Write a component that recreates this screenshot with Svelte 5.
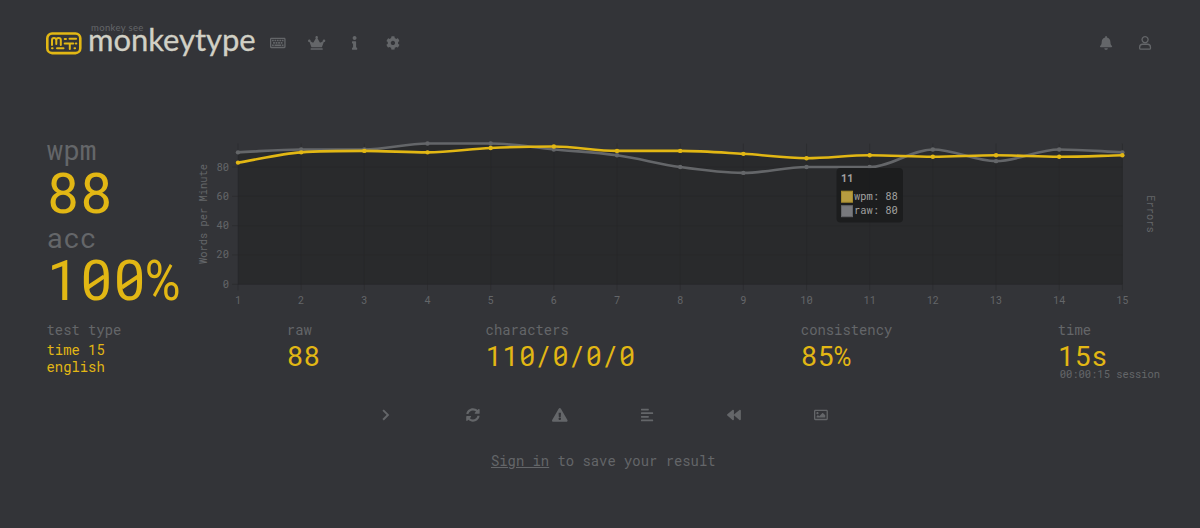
<script>
  const wpm = [83, 90, 91, 90, 93, 94, 91, 91, 89, 86, 88, 87, 88, 87, 88];
  const raw = [90, 92, 92, 96, 96, 92, 88, 80, 76, 80, 80, 92, 84, 92, 90];
  const ticks = [0, 20, 40, 60, 80];

  const left = 42;
  const bottom = 147.3;
  const step = 63.17;
  const right = left + step * 14;

  const px = (i) => left + i * step;
  const py = (v) => bottom - v * 1.466;

  // monotone cubic interpolation, so the line never overshoots a point
  const curve = (values) => {
    const d = values.slice(1).map((v, i) => v - values[i]);
    const m = values.map((_, i) => {
      if (i === 0) return d[0];
      if (i === values.length - 1) return d[i - 1];
      return d[i - 1] * d[i] <= 0 ? 0 : (d[i - 1] + d[i]) / 2;
    });
    d.forEach((slope, i) => {
      if (slope === 0) {
        m[i] = m[i + 1] = 0;
        return;
      }
      const a = m[i] / slope;
      const b = m[i + 1] / slope;
      const size = a * a + b * b;
      if (size > 9) {
        const t = 3 / Math.sqrt(size);
        m[i] = a * t * slope;
        m[i + 1] = b * t * slope;
      }
    });
    let path = `M${px(0)} ${py(values[0])}`;
    for (let i = 0; i < d.length; i++) {
      path += `C${px(i + 1 / 3)} ${py(values[i] + m[i] / 3)} ${px(i + 2 / 3)} ${py(values[i + 1] - m[i + 1] / 3)} ${px(i + 1)} ${py(values[i + 1])}`;
    }
    return path;
  };

  const area = (values) => `${curve(values)}V${bottom}H${left}Z`;

  const icons = {
    keyboard: {
      w: 576,
      d: 'M528 64H48C21.5 64 0 85.5 0 112v288c0 26.5 21.5 48 48 48h480c26.5 0 48-21.5 48-48V112c0-26.5-21.5-48-48-48zm-6 336H54a6 6 0 0 1-6-6V118a6 6 0 0 1 6-6h468a6 6 0 0 1 6 6v276a6 6 0 0 1-6 6zM76 136h64v56H76zm90 0h64v56h-64zm90 0h64v56h-64zm90 0h64v56h-64zm90 0h64v56h-64zM116 222h64v60h-64zm93 0h64v60h-64zm93 0h64v60h-64zm93 0h64v60h-64zM76 312h64v60H76zm90 0h244v60H166zm270 0h64v60h-64z'
    },
    crown: {
      w: 640,
      d: 'M528 448H112c-8.8 0-16 7.2-16 16v32c0 8.8 7.2 16 16 16h416c8.8 0 16-7.2 16-16v-32c0-8.8-7.2-16-16-16zm64-320c-26.5 0-48 21.5-48 48 0 7.1 1.6 13.7 4.4 19.8L476 239.2c-15.4 9.2-35.3 4-44.2-11.6L350.3 85C361 76.2 368 63 368 48c0-26.5-21.5-48-48-48s-48 21.5-48 48c0 15 7 28.2 17.7 37l-81.5 142.6c-8.9 15.6-28.9 20.8-44.2 11.6l-72.3-43.4c2.7-6 4.4-12.7 4.4-19.8 0-26.5-21.5-48-48-48S0 149.5 0 176s21.5 48 48 48c2.6 0 5.2-.4 7.7-.8L128 416h384l72.3-192.8c2.5.4 5.1.8 7.7.8 26.5 0 48-21.5 48-48s-21.5-48-48-48z'
    },
    info: {
      w: 192,
      d: 'M20 424.229h20V279.771H20c-11.046 0-20-8.954-20-20V212c0-11.046 8.954-20 20-20h112c11.046 0 20 8.954 20 20v212.229h20c11.046 0 20 8.954 20 20V492c0 11.046-8.954 20-20 20H20c-11.046 0-20-8.954-20-20v-47.771c0-11.046 8.954-20 20-20zM96 0C56.235 0 24 32.235 24 72s32.235 72 72 72 72-32.235 72-72S135.764 0 96 0z'
    },
    cog: {
      w: 512,
      d: 'M487.4 315.7l-42.6-24.6c4.3-23.2 4.3-47 0-70.2l42.6-24.6c4.9-2.8 7.1-8.6 5.5-14-11.1-35.6-30-67.8-54.7-94.6-3.8-4.1-10-5.1-14.8-2.3L380.8 110c-17.9-15.4-38.5-27.3-60.8-35.1V25.8c0-5.6-3.9-10.5-9.4-11.7-36.7-8.2-74.3-7.8-109.2 0-5.5 1.2-9.4 6.1-9.4 11.7V75c-22.2 7.9-42.8 19.8-60.8 35.1L88.7 85.5c-4.9-2.8-11-1.9-14.8 2.3-24.7 26.7-43.6 58.9-54.7 94.6-1.7 5.4.6 11.2 5.5 14L67.3 221c-4.3 23.2-4.3 47 0 70.2l-42.6 24.6c-4.9 2.8-7.1 8.6-5.5 14 11.1 35.6 30 67.8 54.7 94.6 3.8 4.1 10 5.1 14.8 2.3l42.6-24.6c17.9 15.4 38.5 27.3 60.8 35.1v49.2c0 5.6 3.9 10.5 9.4 11.7 36.7 8.2 74.3 7.8 109.2 0 5.5-1.2 9.4-6.1 9.4-11.7v-49.2c22.2-7.9 42.8-19.8 60.8-35.1l42.6 24.6c4.9 2.8 11 1.9 14.8-2.3 24.7-26.7 43.6-58.9 54.7-94.6 1.5-5.5-.7-11.3-5.6-14.1zM256 336c-44.1 0-80-35.9-80-80s35.9-80 80-80 80 35.9 80 80-35.9 80-80 80z'
    },
    bell: {
      w: 448,
      d: 'M224 512c35.32 0 63.97-28.65 63.97-64H160.03c0 35.35 28.65 64 63.97 64zm215.39-149.71c-19.32-20.76-55.47-51.99-55.47-154.29 0-77.7-54.48-139.9-127.94-155.16V32c0-17.67-14.32-32-31.98-32s-31.98 14.33-31.98 32v20.84C118.56 68.1 64.08 130.3 64.08 208c0 102.3-36.15 133.53-55.47 154.29-6 6.45-8.66 14.16-8.61 21.71.11 16.4 12.98 32 32.1 32h383.8c19.12 0 32-15.6 32.1-32 .05-7.55-2.61-15.27-8.61-21.71z'
    },
    user: {
      w: 448,
      line: 'M224 24a112 112 0 1 0 .1 0zM135 304h178c62 0 111 48 111 110v40c0 20-14 34-34 34H58c-20 0-34-14-34-34v-40c0-62 49-110 111-110z'
    },
    next: { w: 320, line: 'M78 76l178 180L78 436', thick: true },
    sync: {
      w: 512,
      d: 'M370.72 133.28C339.458 104.008 298.888 87.962 255.848 88c-77.458.068-144.328 53.178-162.791 126.85-1.344 5.363-6.122 9.15-11.651 9.15H24.103c-7.498 0-13.194-6.807-11.807-14.176C33.933 94.924 134.813 8 256 8c66.448 0 126.791 26.136 171.315 68.685L463.03 40.97C478.149 25.851 504 36.559 504 57.941V192c0 13.255-10.745 24-24 24H345.941c-21.382 0-32.09-25.851-16.971-40.971l41.75-41.749zM32 296h134.059c21.382 0 32.09 25.851 16.971 40.971l-41.75 41.75c31.262 29.273 71.835 45.319 114.876 45.28 77.418-.07 144.315-53.144 162.787-126.849 1.344-5.363 6.122-9.15 11.651-9.15h57.304c7.498 0 13.194 6.807 11.807 14.176C478.067 417.076 377.187 504 256 504c-66.448 0-126.791-26.136-171.315-68.685L48.97 471.03C33.851 486.149 8 475.441 8 454.059V320c0-13.255 10.745-24 24-24z'
    },
    warning: {
      w: 576,
      d: 'M569.517 440.013C587.975 472.007 564.806 512 527.94 512H48.054c-36.937 0-59.999-40.055-41.577-71.987L246.423 23.985c18.467-32.009 64.72-31.951 83.154 0l239.94 416.028zM288 354c-25.405 0-46 20.595-46 46s20.595 46 46 46 46-20.595 46-46-20.595-46-46-46zm-43.673-165.346l7.418 136c.347 6.364 5.609 11.346 11.982 11.346h48.546c6.373 0 11.635-4.982 11.982-11.346l7.418-136c.375-6.874-5.098-12.654-11.982-12.654h-63.383c-6.884 0-12.356 5.78-11.981 12.654z'
    },
    align: {
      w: 448,
      d: 'M14 24h260q14 0 14 14v36q0 14-14 14H14Q0 88 0 74V38Q0 24 14 24zm0 134h420q14 0 14 14v36q0 14-14 14H14q-14 0-14-14v-36q0-14 14-14zm0 134h260q14 0 14 14v36q0 14-14 14H14q-14 0-14-14v-36q0-14 14-14zm0 134h420q14 0 14 14v36q0 14-14 14H14q-14 0-14-14v-36q0-14 14-14z'
    },
    backward: {
      w: 512,
      d: 'M11.5 280.6l192 160c20.6 17.2 52.5 2.8 52.5-24.6V96c0-27.4-31.9-41.8-52.5-24.6l-192 160c-15.3 12.8-15.3 36.4 0 49.2zm256 0l192 160c20.6 17.2 52.5 2.8 52.5-24.6V96c0-27.4-31.9-41.8-52.5-24.6l-192 160c-15.3 12.8-15.3 36.4 0 49.2z'
    },
    image: {
      w: 512,
      d: 'M464 64H48C21.49 64 0 85.49 0 112v288c0 26.51 21.49 48 48 48h416c26.51 0 48-21.49 48-48V112c0-26.51-21.49-48-48-48zm-6 336H54a6 6 0 0 1-6-6V118a6 6 0 0 1 6-6h404a6 6 0 0 1 6 6v276a6 6 0 0 1-6 6zM128 152c-22.091 0-40 17.909-40 40s17.909 40 40 40 40-17.909 40-40-17.909-40-40-40zM96 352h320v-80l-87.515-87.515c-4.686-4.686-12.284-4.686-16.971 0L192 304l-39.515-39.515c-4.686-4.686-12.284-4.686-16.971 0L96 304v48z'
    }
  };

  const menu = ['keyboard', 'crown', 'info', 'cog'];
  const account = ['bell', 'user'];
  const actions = ['next', 'sync', 'warning', 'align', 'backward', 'image'];
</script>

{#snippet icon(name)}
  <svg class="icon" viewBox="0 0 {icons[name].w} 512" style="width: {icons[name].w / 512}em">
    {#if icons[name].line}
      <path class="line" class:thick={icons[name].thick} d={icons[name].line} />
    {:else}
      <path fill-rule="evenodd" d={icons[name].d} />
    {/if}
  </svg>
{/snippet}

{#snippet digits(text)}{#each text.split('') as c}<span class="cell" class:zero={c === '0'} class:percent={c === '%'}>{c}</span>{/each}{/snippet}

<div class="page">
  <header>
    <div class="logo">
      <svg width="36" height="23" viewBox="0 0 36 23">
        <rect x="1.3" y="1.5" width="33" height="19.6" rx="4.8" stroke-width="2.6" />
        <path d="M6 13V8.2q0-2.2 2-2.2t2.3 2.2V12M10.3 8.2q0-2.2 2.3-2.2t2.2 2.2V13M18.7 7.1h1.3M23.5 6.7h6.6M18.7 11.5h8.6M23.8 11.5V17M29.8 11.5h.5M6 16.3h.6M11 16.3h6.5M28.5 16.3h.6" />
      </svg>
      <div class="brand">
        <span class="slogan">monkey see</span>
        <span class="name">monkeytype</span>
      </div>
    </div>
    <nav>
      {#each menu as name}<button>{@render icon(name)}</button>{/each}
    </nav>
    <nav class="account">
      {#each account as name}<button>{@render icon(name)}</button>{/each}
    </nav>
  </header>

  <main>
    <div class="result">
      <div class="scores">
        <div class="label">wpm</div>
        <div class="score">{@render digits('88')}</div>
        <div class="label">acc</div>
        <div class="score">{@render digits('100%')}</div>
      </div>

      <svg class="chart" width="964" height="172" viewBox="0 0 964 172">
        <path class="area" d={area(raw)} />
        <path class="area" d={area(wpm)} />
        {#each ticks as tick}
          <line class="grid" x1={left - 6} x2={right} y1={py(tick)} y2={py(tick)} />
          <text class="end" x="33" y={py(tick) + 3.5}>{tick}</text>
        {/each}
        {#each wpm as _, i}
          <line class="grid" x1={px(i)} x2={px(i)} y1={py(96)} y2={bottom + 6} />
          <text class="middle" x={px(i)} y="166.5">{i + 1}</text>
        {/each}
        <text class="middle" transform="translate(10.5 77) rotate(-90)">Words per Minute</text>
        <text class="middle" transform="translate(951 77) rotate(90)">Errors</text>

        <path class="raw" d={curve(raw)} />
        {#each raw as v, i}<circle class="raw-dot" cx={px(i)} cy={py(v)} r="2.2" />{/each}
        <path class="wpm" d={curve(wpm)} />
        {#each wpm as v, i}<circle class="wpm-dot" cx={px(i)} cy={py(v)} r="2.2" />{/each}

        <g class="tooltip">
          <rect class="box" x="640.5" y="31" width="66.5" height="54.5" rx="4" />
          <text class="title" x="645" y="45">11</text>
          <rect x="645.5" y="54.2" width="11" height="11" fill="#b79c40" stroke="#a58a2c" />
          <text x="658" y="62.5">wpm: 88</text>
          <rect x="645.5" y="68.7" width="11" height="11" fill="#78797d" stroke="#646669" />
          <text x="658" y="77">raw: 80</text>
        </g>
      </svg>
    </div>

    <div class="stats">
      <div class="stat">
        <div class="caption">test type</div>
        <div class="small">time 15<br />english</div>
      </div>
      <div class="stat">
        <div class="caption">raw</div>
        <div class="value">{@render digits('88')}</div>
      </div>
      <div class="stat">
        <div class="caption">characters</div>
        <div class="value">{@render digits('110/0/0/0')}</div>
      </div>
      <div class="stat">
        <div class="caption">consistency</div>
        <div class="value">{@render digits('85%')}</div>
      </div>
      <div class="stat">
        <div class="caption">time</div>
        <div class="value">{@render digits('15s')}</div>
        <div class="session">00:00:15 session</div>
      </div>
    </div>

    <div class="actions">
      {#each actions as name}<button>{@render icon(name)}</button>{/each}
    </div>

    <p class="login"><u>Sign in</u> to save your result</p>
  </main>
</div>

<style>
  :global(body) {
    background: #333438;
  }

  .page {
    box-sizing: border-box;
    width: 1200px;
    height: 528px;
    padding: 23px 40px 0 46.5px;
    overflow: hidden;
    background: #333438;
    color: #646669;
    font-family: 'Roboto Mono', 'Liberation Mono', monospace;
    font-size: 13.87px;
  }

  header {
    display: flex;
    align-items: center;
    height: 39px;
  }

  .logo {
    display: flex;
    align-items: flex-start;
    width: 213.5px;
    height: 39px;
    margin-left: -1px;
  }

  .logo svg {
    flex: none;
    margin-top: 9px;
    fill: none;
    stroke: #e2b714;
    stroke-width: 2;
    stroke-linecap: round;
    stroke-linejoin: round;
  }

  .brand {
    display: flex;
    flex-direction: column;
    margin-left: 6.5px;
    font-family: Lato, sans-serif;
    white-space: nowrap;
  }

  .slogan {
    margin-left: 3px;
    font-size: 9.5px;
    line-height: 10px;
    letter-spacing: 0.35px;
  }

  .name {
    margin-top: -1px;
    color: #d1d0c5;
    font-size: 31px;
    line-height: 15px;
    letter-spacing: -0.05px;
    -webkit-text-stroke: 0.3px #d1d0c5;
  }

  button {
    display: flex;
    align-items: center;
    justify-content: center;
    width: 38.4px;
    height: 28px;
    padding: 0;
    border: 0;
    background: none;
    color: inherit;
    font-size: 13.87px;
  }

  nav {
    display: flex;
  }

  .account {
    margin-left: auto;
    margin-right: -4px;
  }

  .icon {
    height: 1em;
    fill: currentColor;
    overflow: visible;
  }

  .line {
    fill: none;
    stroke: currentColor;
    stroke-width: 48;
  }

  .thick {
    stroke-width: 72;
  }

  .result {
    display: flex;
    justify-content: space-between;
    height: 174px;
    margin-top: 75px;
  }

  .label {
    height: 32px;
    font-size: 27.74px;
    line-height: 28px;
  }

  .score {
    height: 57px;
    margin-top: -1.5px;
    color: #e2b714;
    font-family: Roboto, sans-serif;
    font-size: 55.48px;
    line-height: 55.5px;
    white-space: nowrap;
  }

  .scores {
    margin-top: -1px;
  }

  /* Roboto glyphs set in fixed width cells */
  .cell {
    display: inline-flex;
    position: relative;
    justify-content: center;
    width: 0.6em;
    font-family: Roboto, sans-serif;
  }

  .zero::after {
    content: '';
    position: absolute;
    top: 50%;
    left: 50%;
    width: 0.36em;
    height: 0.075em;
    background: currentColor;
    transform: translate(-50%, -50%) rotate(-34deg);
  }

  .percent {
    transform: scaleX(0.88);
  }

  .chart {
    margin-right: 0.5px;
    overflow: visible;
  }

  .chart text {
    fill: #646669;
    font-size: 10.4px;
  }

  .chart .middle {
    text-anchor: middle;
  }

  .chart .end {
    text-anchor: end;
  }

  .area {
    fill: #292a2c;
  }

  .grid {
    stroke: #252628;
    stroke-width: 1;
    stroke-opacity: 0.45;
  }

  .raw,
  .wpm {
    fill: none;
    stroke: #646669;
    stroke-width: 2.6;
  }

  .raw-dot {
    fill: #646669;
  }

  .wpm {
    stroke: #e2b714;
  }

  .wpm-dot {
    fill: #e2b714;
  }

  .box {
    fill: #1b1c1d;
    fill-opacity: 0.9;
  }

  .chart .tooltip text {
    fill: #a2a2a0;
  }

  .tooltip .title {
    font-weight: bold;
  }

  .stats {
    display: flex;
    justify-content: space-between;
    height: 79px;
    margin-top: 10px;
  }

  .caption {
    height: 20px;
    line-height: 17px;
  }

  .small {
    color: #e2b714;
    line-height: 17px;
  }

  .value {
    height: 22px;
    padding-top: 6px;
    color: #e2b714;
    font-family: Roboto, sans-serif;
    font-size: 27.74px;
    line-height: 20px;
  }

  .session {
    margin-left: 2px;
    font-size: 10.45px;
    line-height: 11px;
  }

  .actions {
    display: flex;
    justify-content: center;
    margin-top: 1px;
  }

  .actions button {
    width: 87px;
  }

  .login {
    margin: 23px 0 0;
    line-height: 18px;
    text-align: center;
  }
</style>
